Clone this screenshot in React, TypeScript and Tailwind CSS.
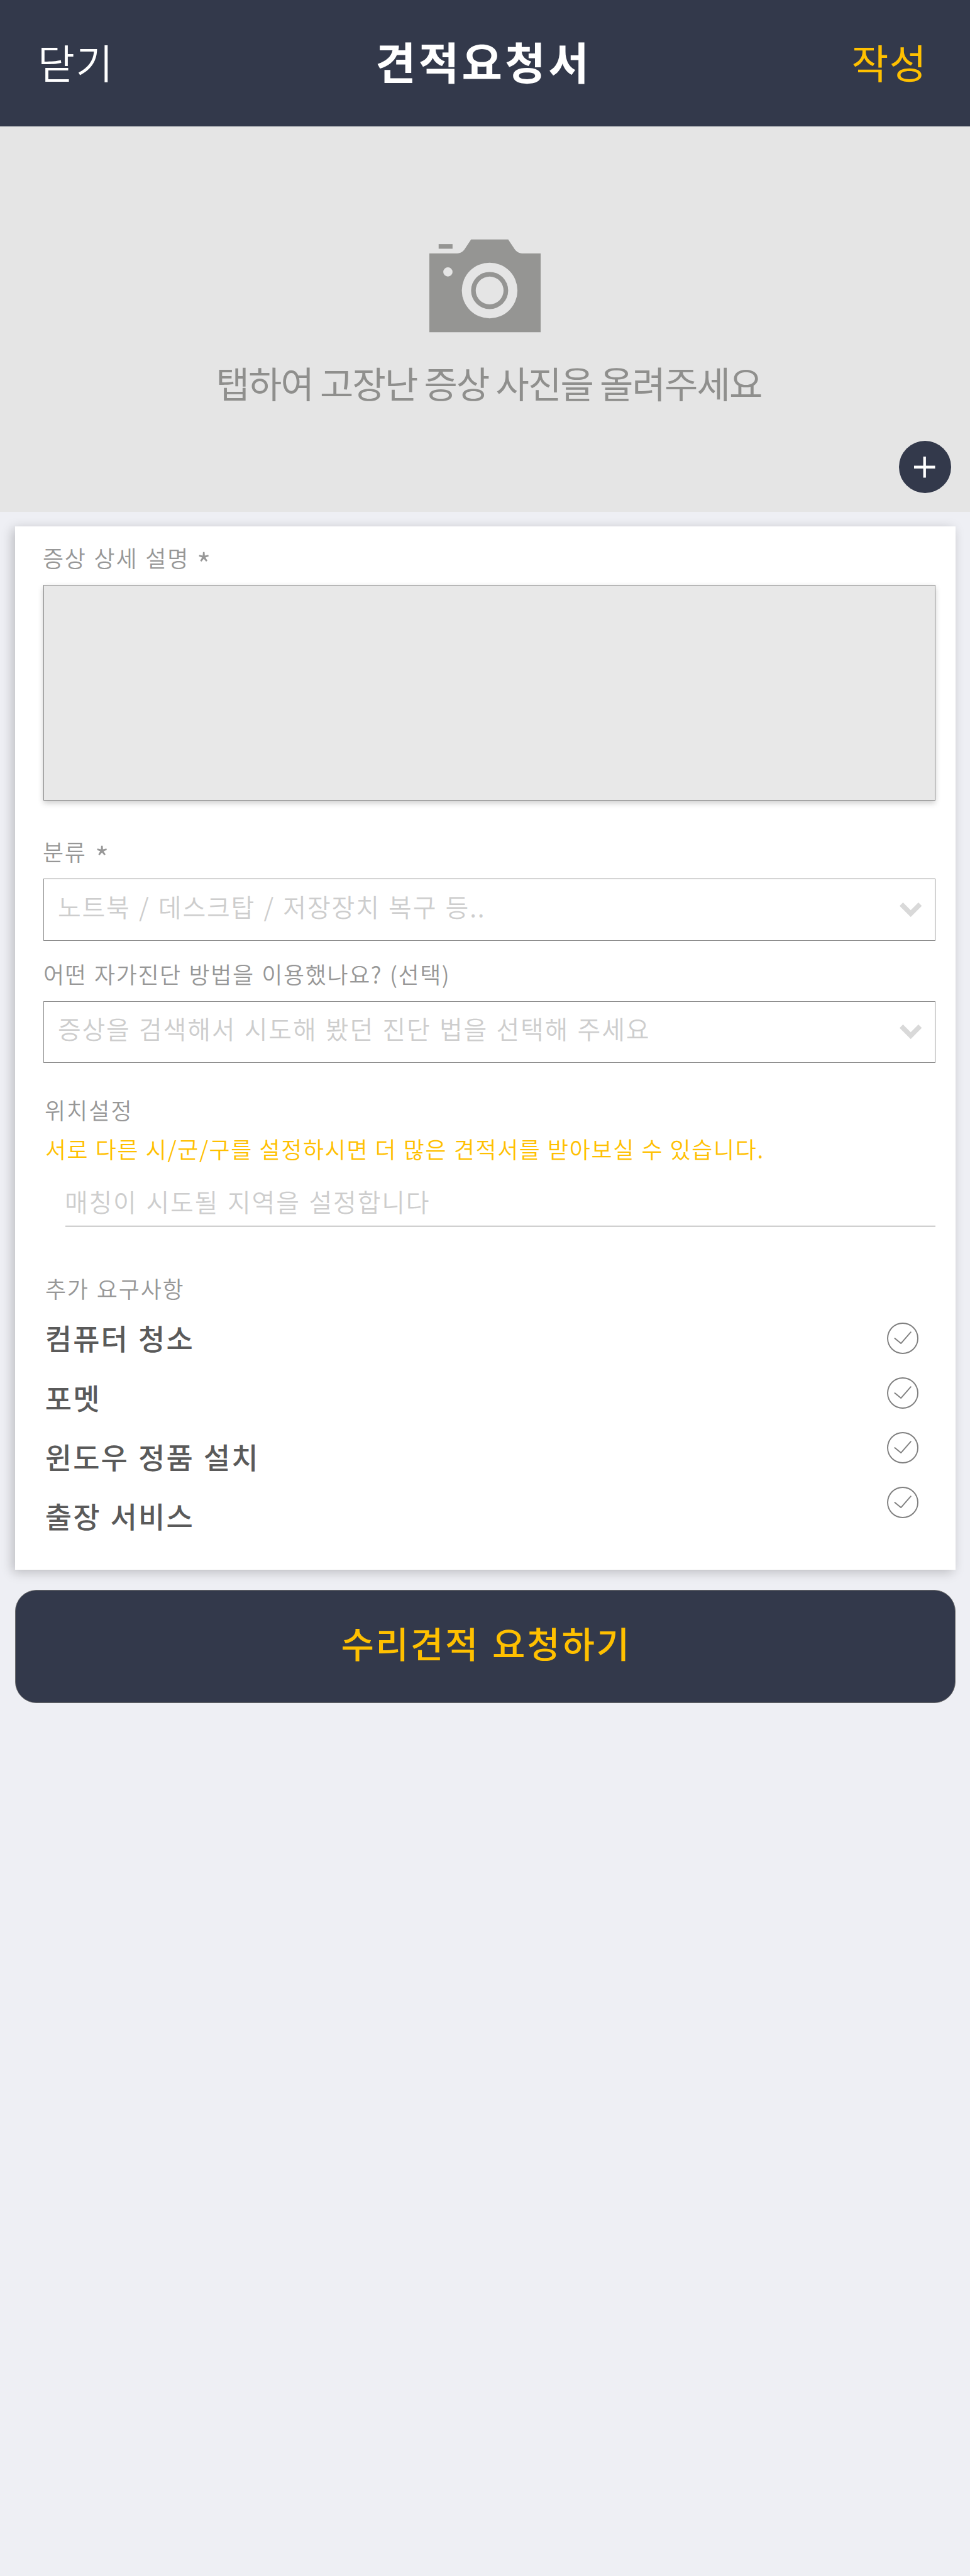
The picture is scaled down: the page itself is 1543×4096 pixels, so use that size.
import type { ReactNode } from 'react';

const OPTIONS = ['컴퓨터 청소', '포멧', '윈도우 정품 설치', '출장 서비스'];

function CameraIcon() {
  return (
    <svg viewBox="0 0 24 24" className="block size-[177px]" fill="#959593">
      <path
        fillRule="evenodd"
        d="M9 2h8l1.35 2.05C18.8 4.7 19.35 5 20 5h4v17H0V5h6c.7 0 1.25-.3 1.65-.95L9 2zM13 7a6 6 0 1 0 0 12a6 6 0 1 0 0-12zM4 8a1 1 0 1 0 0 2a1 1 0 1 0 0-2z"
      />
      <path fillRule="evenodd" d="M13 9a4 4 0 1 0 0 8a4 4 0 1 0 0-8zM13 10a3 3 0 1 1 0 6a3 3 0 1 1 0-6z" />
      <path d="M2 3h3v1H2z" />
    </svg>
  );
}

function PlusIcon() {
  return (
    <svg viewBox="0 0 47 47" className="block size-[33.5px]" fill="#ffffff">
      <path d="M20.5 0h6v20.5H47v6H26.5V47h-6V26.5H0v-6h20.5z" />
    </svg>
  );
}

function ChevronIcon() {
  return (
    <svg viewBox="0 0 49.6 32.4" className="block h-[23.2px] w-[35.4px]" fill="#d9d9d9">
      <path d="M7.6 0L24.8 17.2L42 0L49.6 7.6L24.8 32.4L0 7.6z" />
    </svg>
  );
}

function CheckIcon() {
  return (
    <svg
      viewBox="0 0 70 70"
      className="block size-[50px]"
      fill="none"
      stroke="#808080"
      strokeWidth="2.7"
      strokeLinecap="round"
      strokeLinejoin="round"
    >
      <circle cx="35" cy="35" r="33.6" />
      <path d="M17.3 35L31 46.3L53 21.3" />
    </svg>
  );
}

function Label({ children, className = '' }: { children: ReactNode; className?: string }) {
  return (
    <p className={`text-[36px] leading-[50px] font-[350] whitespace-nowrap ${className}`}>{children}</p>
  );
}

function Required() {
  return <span className="inline-block origin-left translate-y-[8px] scale-[1.35]">*</span>;
}

function SelectBox({ placeholder, className = '' }: { placeholder: string; className?: string }) {
  return (
    <div
      className={`flex h-[98.6px] items-center justify-between border border-[#8a8a8a] pr-[20.5px] pl-[22px] ${className}`}
    >
      <span className="mb-[11px] text-[40px] leading-[56px] font-[350] tracking-[1.8px] whitespace-nowrap text-[#cdcdcd] [word-spacing:2.6px]">
        {placeholder}
      </span>
      <ChevronIcon />
    </div>
  );
}

export default function App() {
  return (
    <div className="flex h-[4096px] w-[1543px] flex-col overflow-hidden bg-[#eeeff4] font-['Noto_Sans_CJK_KR',sans-serif]">
      <header className="flex h-[201.4px] shrink-0 items-center justify-between bg-[#33394b] pr-[67.8px] pb-[8px] pl-[60.1px]">
        <button className="text-[64px] leading-[90px] font-[350] tracking-[1.8px] text-white">닫기</button>
        <h1 className="ml-[2px] text-[70px] leading-[90px] font-bold tracking-[4.4px] text-white">견적요청서</h1>
        <button className="text-[64px] leading-[90px] tracking-[1.5px] text-[#ffc000]">작성</button>
      </header>

      <section className="relative flex h-[613px] shrink-0 flex-col items-center bg-[#e5e5e5] pt-[164.2px]">
        <CameraIcon />
        <p className="mt-[23.5px] ml-[12px] text-[58px] leading-[84px] tracking-[-1.89px] whitespace-nowrap text-[#8f8f8d]">
          탭하여 고장난 증상 사진을 올려주세요
        </p>
        <button className="absolute right-[30.5px] bottom-[30px] flex size-[83px] items-center justify-center rounded-full bg-[#33394b]">
          <PlusIcon />
        </button>
      </section>

      <main className="mt-[22.8px] mr-[22.8px] ml-[24.1px] flex shrink-0 flex-col bg-white pt-[24px] pr-[32.4px] pb-[38.8px] pl-[44.8px] shadow-[-4px_4px_17px_rgba(0,0,0,0.22)]">
        <Label className="-ml-px tracking-[1.8px] text-[#979797] [word-spacing:2px]">
          증상 상세 설명 <Required />
        </Label>
        <div className="mt-[18.9px] h-[343px] border border-[#8a8a8a] bg-[#e8e8e8] shadow-[0_4px_9px_rgba(0,0,0,0.2)]" />

        <Label className="mt-[55.4px] -ml-px tracking-[1.8px] text-[#979797] [word-spacing:3px]">
          분류 <Required />
        </Label>
        <SelectBox className="mt-[18.9px]" placeholder="노트북 / 데스크탑 / 저장장치 복구 등.." />

        <Label className="mt-[26.8px] tracking-[1.6px] text-[#979797] [word-spacing:2px]">
          어떤 자가진단 방법을 이용했나요? (선택)
        </Label>
        <SelectBox className="mt-[18.9px]" placeholder="증상을 검색해서 시도해 봤던 진단 법을 선택해 주세요" />

        <Label className="mt-[48.3px] ml-[2px] tracking-[2.1px] text-[#979797]">위치설정</Label>
        <Label className="mt-[12.9px] ml-[3px] tracking-[1.6px] text-[#ffc000] [word-spacing:0.85px]">
          서로 다른 시/군/구를 설정하시면 더 많은 견적서를 받아보실 수 있습니다.
        </Label>
        <div className="mt-[30.1px] ml-[35px] border-b border-[#5c5c5c] pb-[11.8px]">
          <p className="-ml-px text-[40px] leading-[56px] font-[350] tracking-[1.8px] whitespace-nowrap text-[#cdcdcd] [word-spacing:3px]">
            매칭이 시도될 지역을 설정합니다
          </p>
        </div>

        <Label className="mt-[72.6px] ml-[3px] tracking-[1.8px] text-[#979797] [word-spacing:2.3px]">
          추가 요구사항
        </Label>
        <div className="mt-[6.3px] flex justify-between pr-[26.5px] pb-px pl-[2.9px]">
          <ul>
            {OPTIONS.map((option) => (
              <li
                key={option}
                className="text-[46px] leading-[94.35px] font-medium tracking-[2.1px] whitespace-nowrap text-[#5a5a5a] [word-spacing:2.5px]"
              >
                {option}
              </li>
            ))}
          </ul>
          <div className="flex flex-col gap-[37.15px] pt-[23.8px]">
            {OPTIONS.map((option) => (
              <CheckIcon key={option} />
            ))}
          </div>
        </div>
      </main>

      <button className="mt-[31.2px] mr-[22.8px] ml-[24.1px] flex h-[180px] shrink-0 items-center justify-center rounded-[34px] border border-[#707070] bg-[#33394b] pb-[14px] pl-[2px] text-[57px] leading-[80px] font-medium tracking-[2.8px] text-[#ffc000] [word-spacing:4px]">
        수리견적 요청하기
      </button>
    </div>
  );
}
